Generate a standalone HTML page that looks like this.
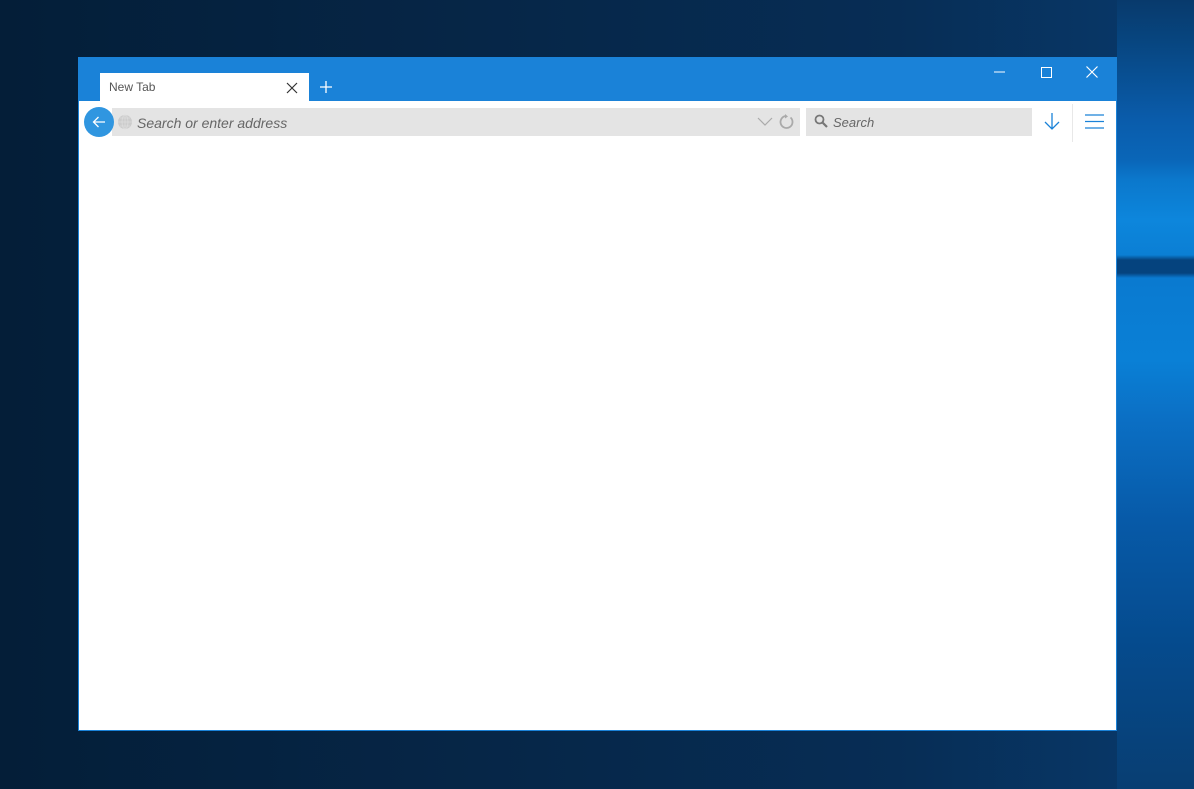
<!DOCTYPE html>
<html><head><style>
body{margin:0;width:1194px;height:789px;overflow:hidden;position:relative;font-family:"Liberation Sans",sans-serif;
background:linear-gradient(90deg,#041e38 0%,#062647 40%,#072d55 75%,#083a6c 100%);}
.rs{position:absolute;left:1117px;top:0;width:77px;height:789px;
background:linear-gradient(180deg,#083a6c 0px,#07457f 40px,#0a5cab 120px,#0a66b8 160px,#0b78cc 180px,#0d86dc 220px,#0b7fd4 255px,#05437e 260px,#05437e 273px,#0a7ad0 278px,#0a80d6 360px,#0b6fc4 420px,#075aa8 520px,#054b8e 640px,#083e72 789px);}
.win{position:absolute;left:78px;top:57px;width:1037px;height:672px;border:1px solid #1a82d8;background:#fff;}
.title{position:absolute;left:-1px;top:-1px;width:1039px;height:44px;background:#1a82d8;}
.tab{position:absolute;left:22px;top:16px;width:209px;height:28px;background:#fff;}
.tab span{position:absolute;left:9px;top:7px;font-size:12px;color:#555;}
.addr{position:absolute;left:33px;top:50px;width:688px;height:28px;background:#e4e4e4;}
.srch{position:absolute;left:727px;top:50px;width:226px;height:28px;background:#e4e4e4;}
.ph{position:absolute;top:7px;font-size:14px;font-style:italic;color:#666;}
.back{position:absolute;left:5px;top:49px;width:30px;height:30px;border-radius:50%;background:#3096e0;}
</style></head><body>
<div class="rs"></div>
<div class="win">
<div class="title">
<div class="tab"><span>New Tab</span>
<svg style="position:absolute;left:186px;top:9px" width="12" height="12"><path d="M1 1L11 11M11 1L1 11" stroke="#333" stroke-width="1.2"/></svg></div>
<svg style="position:absolute;left:242px;top:24px" width="12" height="12"><path d="M6 0V12M0 6H12" stroke="#fff" stroke-width="1.3"/></svg>
<svg style="position:absolute;left:916px;top:14px" width="12" height="2"><path d="M0 1H11" stroke="#fff"/></svg>
<svg style="position:absolute;left:963px;top:10px" width="12" height="12"><rect x="0.5" y="0.5" width="10" height="10" fill="none" stroke="#fff"/></svg>
<svg style="position:absolute;left:1008px;top:9px" width="12" height="12"><path d="M0.5 0.5L11.5 11.5M11.5 0.5L0.5 11.5" stroke="#fff" stroke-width="1.2"/></svg>
</div>
<div class="addr">
<svg style="position:absolute;left:5px;top:6px" width="16" height="16"><circle cx="8" cy="8" r="7" fill="#ccc"/><path d="M1 8H15M8 1V15M3 4H13M3 12H13" stroke="#ddd" stroke-width="0.8"/><ellipse cx="8" cy="8" rx="3" ry="7" fill="none" stroke="#ddd" stroke-width="0.8"/></svg>
<span class="ph" style="left:25px">Search or enter address</span>
<svg style="position:absolute;left:645px;top:9px" width="16" height="10"><path d="M1 1L8 8L15 1" stroke="#aaa" fill="none" stroke-width="1.2"/></svg>
<svg style="position:absolute;left:667px;top:6px" width="16" height="16"><path d="M11.5 3.5A6 6 0 1 1 7 2" stroke="#aaa" fill="none" stroke-width="1.8"/><path d="M6 0L9 2.5L6 4.5Z" fill="#aaa"/></svg>
</div>
<div class="srch">
<svg style="position:absolute;left:8px;top:6px" width="14" height="14"><circle cx="5.5" cy="5.5" r="4" stroke="#777" fill="none" stroke-width="1.8"/><path d="M8.5 8.5L13 13" stroke="#777" stroke-width="2.2"/></svg>
<span class="ph" style="left:27px;font-size:13px">Search</span>
</div>
<div class="back"><svg style="position:absolute;left:8px;top:9px" width="14" height="12"><path d="M13 6H1.5M6.5 1L1.5 6L6.5 11" stroke="#fff" fill="none" stroke-width="1.3"/></svg></div>
<svg style="position:absolute;left:965px;top:55px" width="16" height="18"><path d="M8 0V16M1 9L8 16L15 9" stroke="#1a82d8" fill="none" stroke-width="1.3"/></svg>
<div style="position:absolute;left:993px;top:46px;width:1px;height:38px;background:#e8e8e8"></div>
<svg style="position:absolute;left:1006px;top:56px" width="19" height="16"><path d="M0 1H19M0 7.5H19M0 14H19" stroke="#1a82d8" stroke-width="1.3"/></svg>
</div>
</body></html>
